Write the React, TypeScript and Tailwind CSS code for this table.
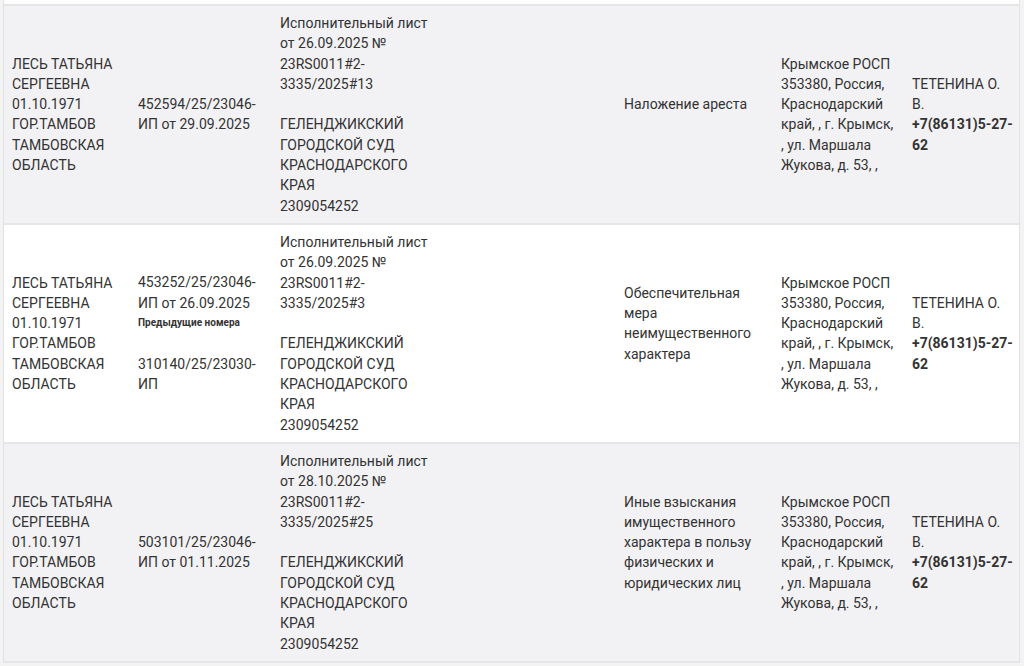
import React from "react";

type Row = {
  debtor: string[];
  ip: string[];
  prev?: string[];
  doc: string[];
  court: string[];
  subject: string[];
  dept: string[];
  officer: string[];
  phone: string[];
};

const dept = [
  "Крымское РОСП",
  "353380, Россия,",
  "Краснодарский",
  "край, , г. Крымск,",
  ", ул. Маршала",
  "Жукова, д. 53, ,",
];

const debtor = [
  "ЛЕСЬ ТАТЬЯНА",
  "СЕРГЕЕВНА",
  "01.10.1971",
  "ГОР.ТАМБОВ",
  "ТАМБОВСКАЯ",
  "ОБЛАСТЬ",
];

const court = ["ГЕЛЕНДЖИКСКИЙ", "ГОРОДСКОЙ СУД", "КРАСНОДАРСКОГО", "КРАЯ", "2309054252"];

const rows: Row[] = [
  {
    debtor,
    ip: ["452594/25/23046-", "ИП от 29.09.2025"],
    doc: ["Исполнительный лист", "от 26.09.2025 №", "23RS0011#2-", "3335/2025#13"],
    court,
    subject: ["Наложение ареста"],
    dept,
    officer: ["ТЕТЕНИНА О.", "В."],
    phone: ["+7(86131)5-27-", "62"],
  },
  {
    debtor,
    ip: ["453252/25/23046-", "ИП от 26.09.2025"],
    prev: ["310140/25/23030-", "ИП"],
    doc: ["Исполнительный лист", "от 26.09.2025 №", "23RS0011#2-", "3335/2025#3"],
    court,
    subject: ["Обеспечительная", "мера", "неимущественного", "характера"],
    dept,
    officer: ["ТЕТЕНИНА О.", "В."],
    phone: ["+7(86131)5-27-", "62"],
  },
  {
    debtor,
    ip: ["503101/25/23046-", "ИП от 01.11.2025"],
    doc: ["Исполнительный лист", "от 28.10.2025 №", "23RS0011#2-", "3335/2025#25"],
    court,
    subject: [
      "Иные взыскания",
      "имущественного",
      "характера в пользу",
      "физических и",
      "юридических лиц",
    ],
    dept,
    officer: ["ТЕТЕНИНА О.", "В."],
    phone: ["+7(86131)5-27-", "62"],
  },
];

function Lines({ items }: { items: string[] }) {
  return (
    <>
      {items.map((t, i) => (
        <div key={i} className="whitespace-nowrap">
          {t}
        </div>
      ))}
    </>
  );
}

export default function App() {
  return (
    <div
      className="h-[666px] overflow-hidden bg-[#f3f3f3] pl-[3px] pr-[4px] text-[14px] leading-[20.3px] text-[#333333]"
      style={{ fontFamily: "Roboto, 'Noto Sans', sans-serif" }}
    >
      <div className="bg-white pt-[4px] border-l border-r border-[#e2e2e2]">
        <table className="w-full table-fixed border-collapse">
          <colgroup>
            <col className="w-[126px]" />
            <col className="w-[142px]" />
            <col className="w-[166px]" />
            <col />
            <col className="w-[157px]" />
            <col className="w-[131px]" />
            <col className="w-[115px]" />
          </colgroup>
          <tbody>
            {rows.map((r, i) => (
              <tr
                key={i}
                className={`border-t-2 border-b-2 border-[#e6e6e8] align-middle ${
                  i % 2 === 0 ? "bg-[#f2f1f3]" : "bg-white"
                }`}
              >
                <td className="px-2 py-[7px]">
                  <Lines items={r.debtor} />
                </td>
                <td className="px-2 py-[7px]">
                  <Lines items={r.ip} />
                  {r.prev && (
                    <>
                      <div className="mt-[3px] text-[10px] leading-[14px] font-bold text-[#333]">
                        Предыдущие номера
                      </div>
                      <div className="mt-[24px]">
                        <Lines items={r.prev} />
                      </div>
                    </>
                  )}
                </td>
                <td className="px-2 py-[7px]">
                  <Lines items={r.doc} />
                  <div className="h-[20.3px]" />
                  <Lines items={r.court} />
                </td>
                <td />
                <td className="px-2 py-[7px]">
                  <Lines items={r.subject} />
                  <div className="h-[20.3px]" />
                </td>
                <td className="px-2 py-[7px]">
                  <Lines items={r.dept} />
                </td>
                <td className="px-2 py-[7px]">
                  <Lines items={r.officer} />
                  <div className="font-bold">
                    <Lines items={r.phone} />
                  </div>
                </td>
              </tr>
            ))}
          </tbody>
        </table>
      </div>
    </div>
  );
}
